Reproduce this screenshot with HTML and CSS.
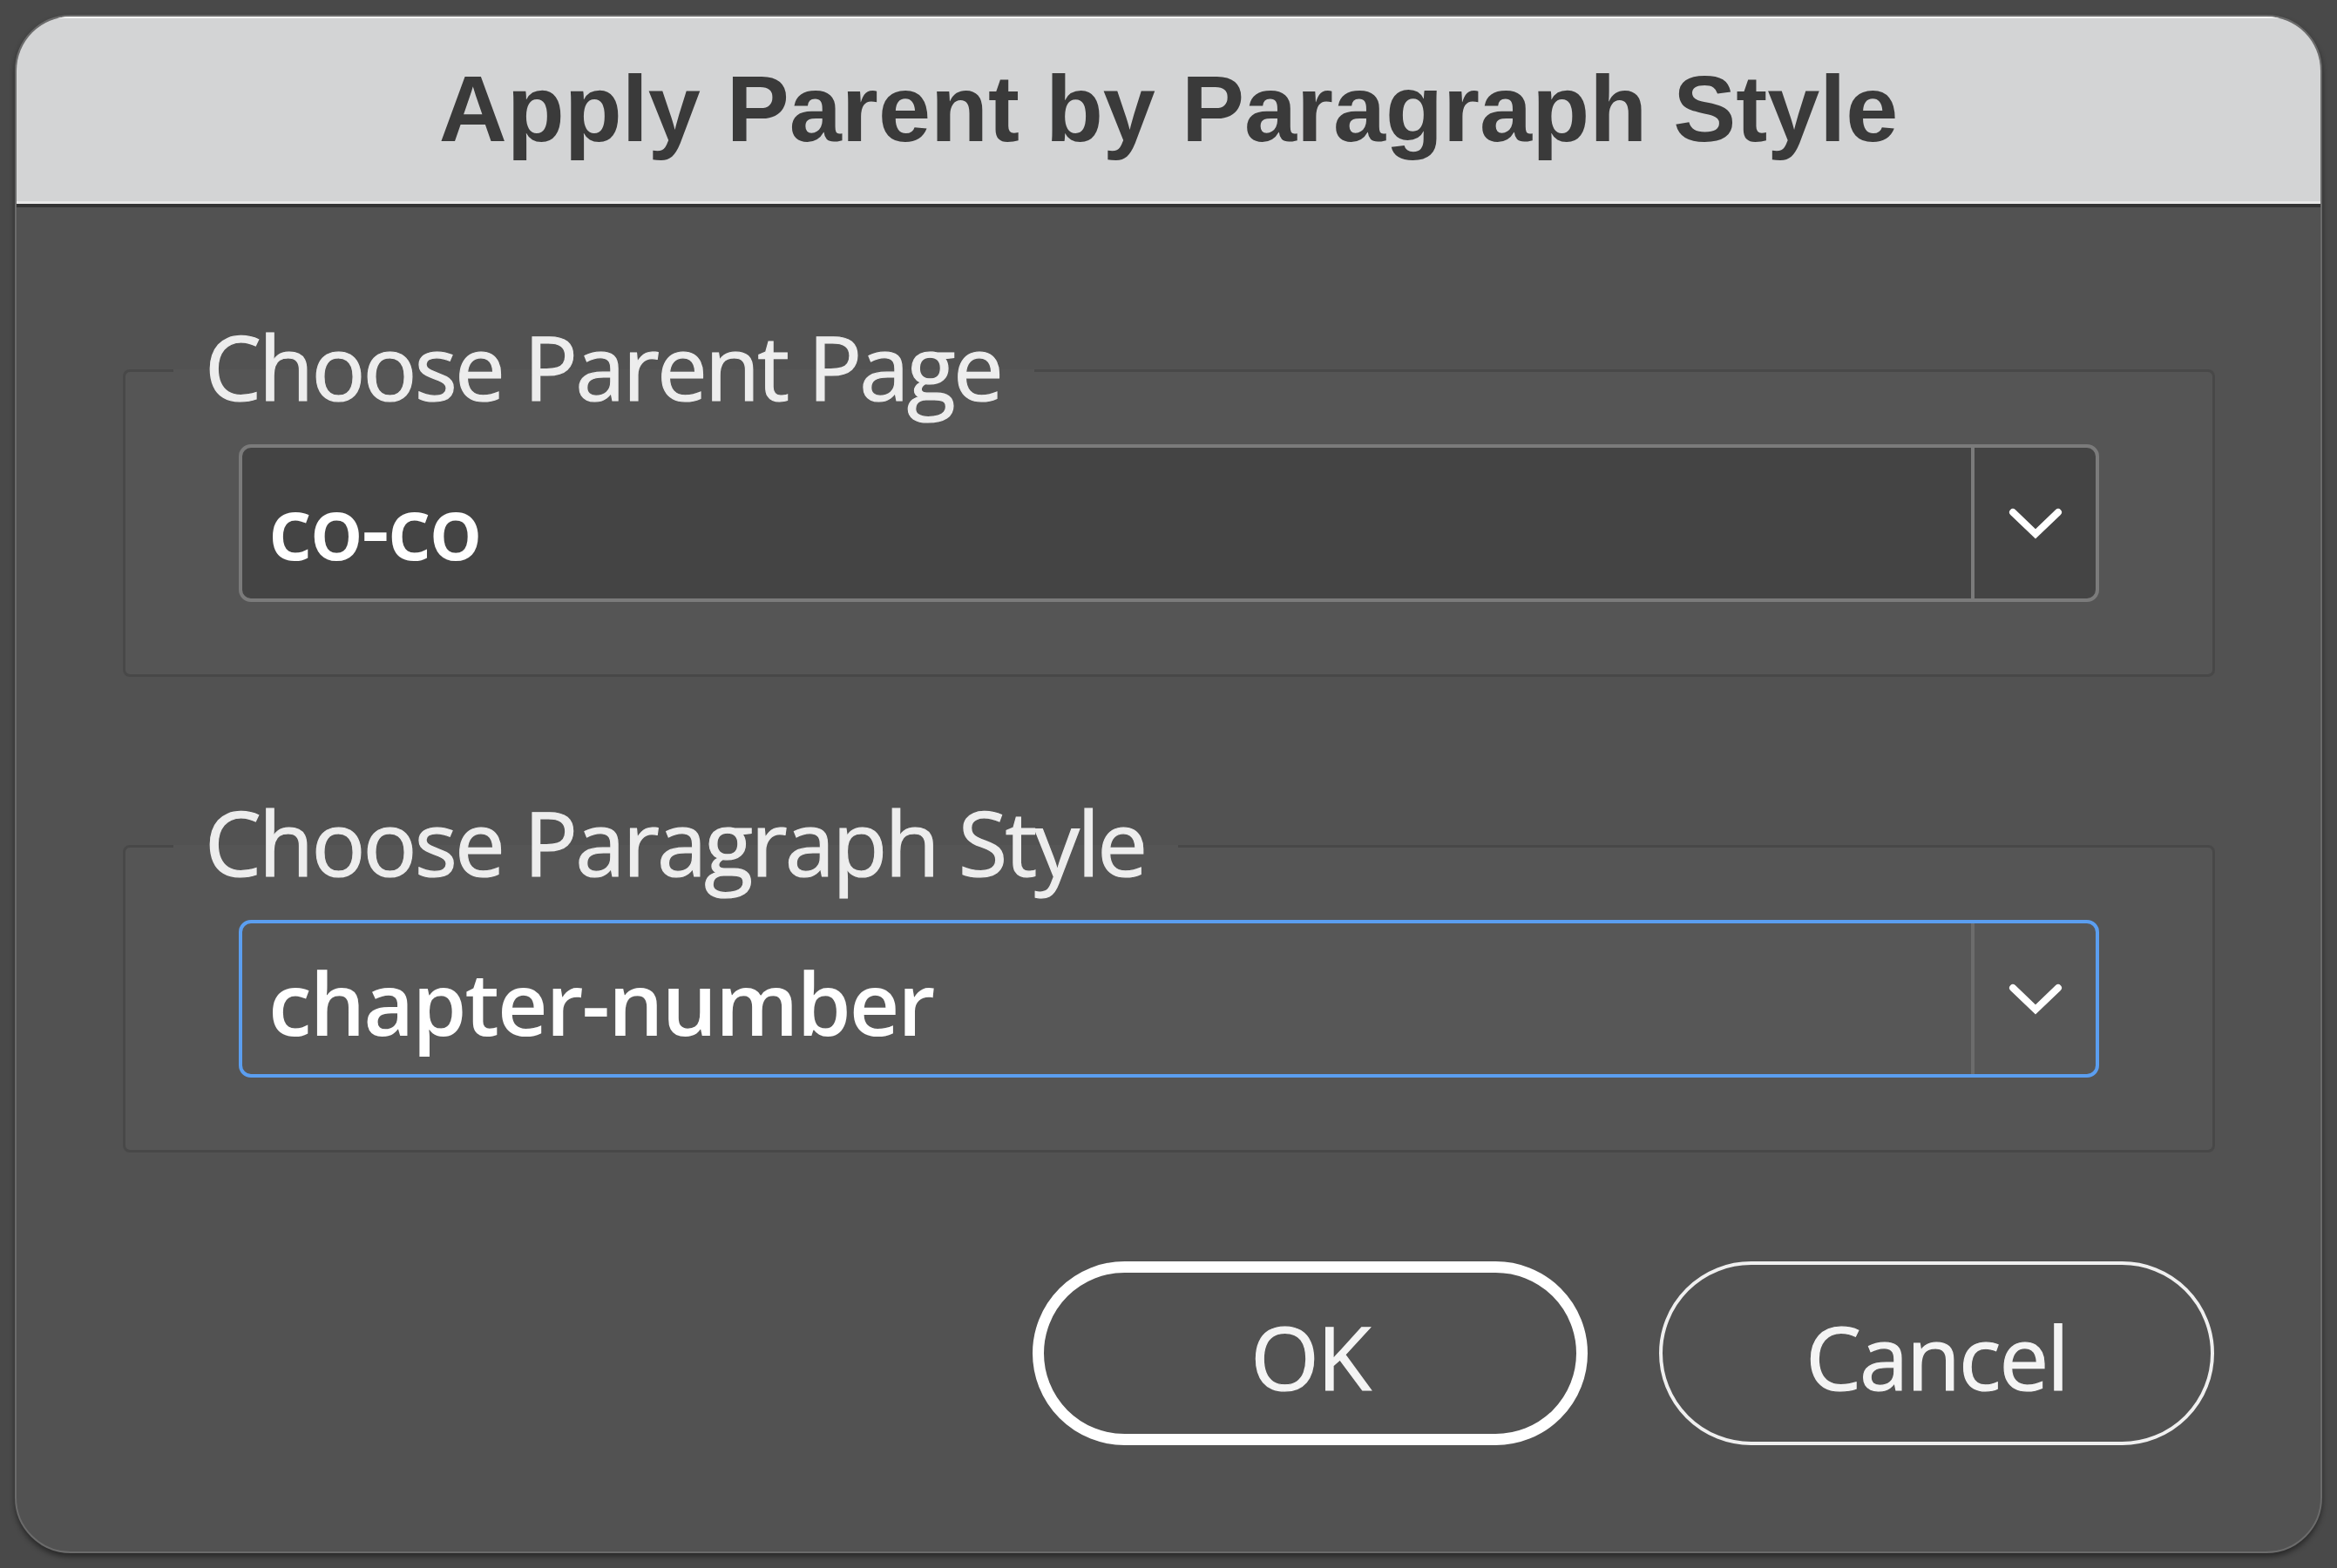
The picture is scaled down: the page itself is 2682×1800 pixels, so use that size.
FILE: index.html
```html
<!DOCTYPE html>
<html lang="en">
<head>
    <meta charset="UTF-8">
    <title>Apply Parent by Paragraph Style</title>
    <link rel="stylesheet" href="styles.css">
</head>
<body>
    <div class="dialog">
        <div class="titlebar">
            <h1>Apply Parent by Paragraph Style</h1>
        </div>
        <div class="dialog-body">
            <fieldset class="group">
                <legend>Choose Parent Page</legend>
                <div class="group-inner">
                    <div class="combo">
                        <span class="combo-value">co-co</span>
                        <span class="combo-arrow">
                            <svg width="64" height="38" viewBox="0 0 64 38"><polyline points="6,6 32,31 58,6" fill="none" stroke="#fff" stroke-width="8" stroke-linecap="round"/></svg>
                        </span>
                    </div>
                </div>
            </fieldset>

            <fieldset class="group">
                <legend>Choose Paragraph Style</legend>
                <div class="group-inner">
                    <div class="combo focused">
                        <span class="combo-value">chapter-number</span>
                        <span class="combo-arrow">
                            <svg width="64" height="38" viewBox="0 0 64 38"><polyline points="6,6 32,31 58,6" fill="none" stroke="#fff" stroke-width="8" stroke-linecap="round"/></svg>
                        </span>
                    </div>
                </div>
            </fieldset>

            <div class="buttons">
                <button class="btn btn-default">OK</button>
                <button class="btn">Cancel</button>
            </div>
        </div>
    </div>
</body>
</html>
```

FILE: styles.css
```css
body {
    margin: 0;
    width: 2682px;
    height: 1800px;
    background-color: #494949;
    font-family: "Open Sans", "Liberation Sans", sans-serif;
}

.dialog {
    margin: 17px;
    height: 1766px;
    box-sizing: border-box;
    background-color: #525252;
    border: 2px solid #6b6b6b;
    border-radius: 64px;
    overflow: hidden;
    box-shadow: 0 4px 6px rgba(0, 0, 0, 0.45);
}

.titlebar {
    height: 219px;
    padding-bottom: 5px;
    box-sizing: border-box;
    display: flex;
    align-items: center;
    justify-content: center;
    background-color: #d3d4d5;
    border-bottom: 4px solid #333;
    box-shadow: inset 0 -3px 0 #e8e8e8, inset 0 2px 0 #f4f4f4;
}

.titlebar h1 {
    margin: 0;
    font-family: "Liberation Sans", Arial, sans-serif;
    font-size: 108px;
    font-weight: bold;
    color: #3a3a3a;
}

.dialog-body {
    padding: 0 121px 0 122px;
}

.group {
    margin: 128px 0 0;
    padding: 0;
    border: 3px solid #484848;
    border-radius: 8px;
    background-color: #555;
}

.group + .group {
    margin-top: 135px;
}

.group legend {
    margin-left: 55px;
    padding: 0 38px 0 36px;
    font-size: 103px;
    line-height: 118px;
    letter-spacing: -2.8px;
    color: #ededed;
    -webkit-text-stroke: 1.2px #ededed; /* a bit heavier, like the native label */
    position: relative;
    top: -5px;
}

.group-inner {
    padding: 26px 130px 83px;
}

.combo {
    display: flex;
    height: 181px;
    box-sizing: border-box;
    background-color: #444;
    border: 4px solid #7b7b7b;
    border-radius: 14px;
}

.combo-value {
    flex-grow: 1;
    display: flex;
    align-items: center;
    padding-left: 30px;
    padding-top: 6px;
    font-size: 100px;
    font-weight: 600;
    letter-spacing: -2px;
    color: #fff;
}

.combo-arrow {
    width: 139px;
    display: flex;
    align-items: center;
    justify-content: center;
    border-left: 4px solid #7b7b7b;
}

.combo.focused {
    background-color: #575757;
    border-color: #5b9ef0;
}

.combo.focused .combo-arrow {
    border-left-color: #6c6c6c;
}

.buttons {
    display: flex;
    justify-content: flex-end;
    gap: 82px;
    margin-top: 125px;
    margin-right: 1px;
}

.btn {
    width: 637px;
    height: 211px;
    box-sizing: border-box;
    background: none;
    border: 4px solid #f0f0f0;
    border-radius: 106px;
    font-family: "Open Sans", "Liberation Sans", sans-serif;
    font-size: 101px;
    letter-spacing: -2px;
    color: #f4f4f4;
    -webkit-text-stroke: 1.2px #f4f4f4;
    padding: 6px 0 0;
}

.btn-default {
    border-width: 13px;
    border-color: #fff;
}
```
